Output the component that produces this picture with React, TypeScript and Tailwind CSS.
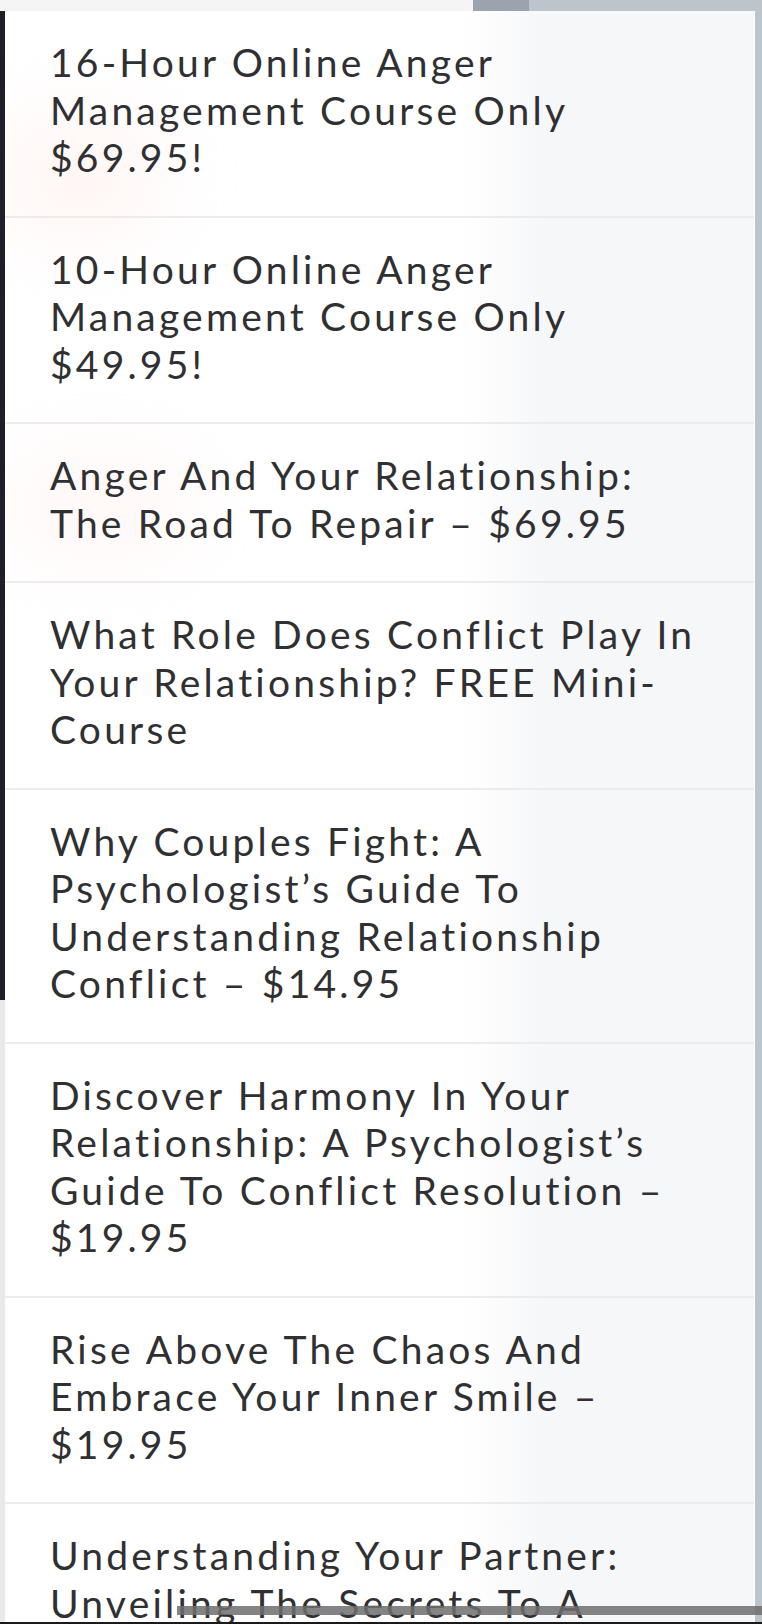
const items: string[][] = [
  ["16-Hour Online Anger", "Management Course Only", "$69.95!"],
  ["10-Hour Online Anger", "Management Course Only", "$49.95!"],
  ["Anger And Your Relationship:", "The Road To Repair – $69.95"],
  ["What Role Does Conflict Play In", "Your Relationship? FREE Mini-", "Course"],
  ["Why Couples Fight: A", "Psychologist’s Guide To", "Understanding Relationship", "Conflict – $14.95"],
  ["Discover Harmony In Your", "Relationship: A Psychologist’s", "Guide To Conflict Resolution –", "$19.95"],
  ["Rise Above The Chaos And", "Embrace Your Inner Smile –", "$19.95"],
  ["Understanding Your Partner:", "Unveiling The Secrets To A", "Deeper Connection"],
];

function MenuItem({ lines }: { lines: string[] }) {
  return (
    <li className="border-b-2 border-[#ececec] pl-[45px] pr-6 pt-[28px] pb-[34px]">
      {lines.map((line, i) => (
        <span key={i} className="block whitespace-nowrap">
          {line}
        </span>
      ))}
    </li>
  );
}

export default function App() {
  return (
    <div className="relative flex h-[1624px] w-[762px] flex-col overflow-hidden bg-white">
      {/* top strip of the page behind the menu */}
      <div className="flex h-[11px] shrink-0">
        <div className="w-[473px] bg-[#f5f5f6]" />
        <div className="w-[56px] bg-[#9aa3ae]" />
        <div className="flex-1 bg-[#bcc4cc]" />
      </div>

      <div className="flex min-h-0 flex-1">
        {/* left edge of the page */}
        <div className="flex w-[5px] shrink-0 flex-col">
          <div className="h-[989px] bg-[#1f2027]" />
          <div className="flex-1 bg-[#e9e9ea]" />
        </div>

        {/* menu panel */}
        <div className="relative min-w-0 flex-1 overflow-hidden bg-gradient-to-r from-white from-[61%] to-[#f6f7f9] to-[72%]">
          <div className="pointer-events-none absolute left-[-10px] top-[100px] h-[130px] w-[170px] rounded-full bg-[#ffdcd6] opacity-25 blur-2xl" />
          <div className="pointer-events-none absolute left-[0px] top-[440px] h-[110px] w-[190px] rounded-full bg-[#ffdcd6] opacity-20 blur-2xl" />
          <ul
            className="relative text-[39px] leading-[47.5px] tracking-[3.2px] text-[#303032]"
            style={{ fontFamily: "Lato, 'Open Sans', sans-serif" }}
          >
            {items.map((lines, i) => (
              <MenuItem key={i} lines={lines} />
            ))}
          </ul>
        </div>

        {/* right edge of the page */}
        <div className="w-[8px] shrink-0 border-l border-white bg-[#bcc4cc]" />
      </div>

      <div className="h-[2px] shrink-0 bg-[#1a1a1a]" />

      {/* horizontal scrollbar thumb */}
      <div className="absolute left-[177px] right-0 top-[1606px] h-[9px] bg-[#6f6f6f]/85" />
    </div>
  );
}
